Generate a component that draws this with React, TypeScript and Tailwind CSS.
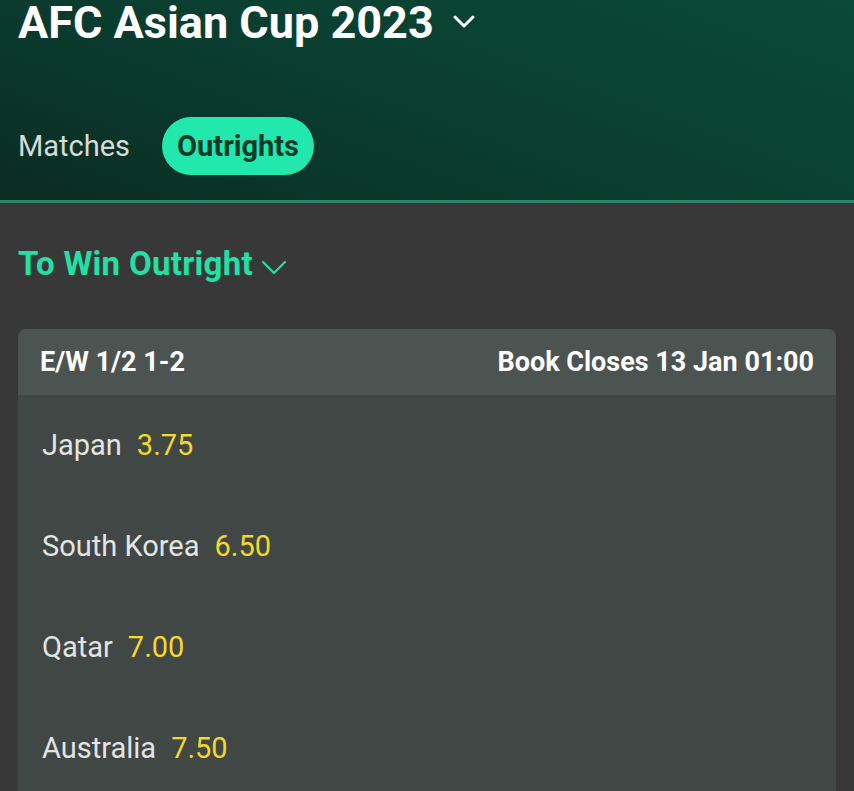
import React from "react";

const rows = [
  { name: "Japan", odds: "3.75" },
  { name: "South Korea", odds: "6.50" },
  { name: "Qatar", odds: "7.00" },
  { name: "Australia", odds: "7.50" },
];

export default function App() {
  return (
    <div className="w-[854px] h-[791px] overflow-hidden bg-[#383838] font-['Roboto',sans-serif]">
      <div className="h-[200px] bg-[linear-gradient(20deg,#0a2c23_0%,#0a3d2f_45%,#0a4a38_100%)] px-[18px]">
        <div className="flex items-center h-[45px]">
          <span className="text-white font-bold text-[45px] leading-[45px] whitespace-nowrap">AFC Asian Cup 2023</span>
          <svg className="ml-[19px] mt-[-2px]" width="22" height="14" viewBox="0 0 22 14">
            <path d="M2 2 L11 11 L20 2" stroke="white" strokeWidth="3" fill="none" strokeLinecap="round" strokeLinejoin="round" />
          </svg>
        </div>
        <div className="flex items-center mt-[72px] h-[58px]">
          <span className="text-[#d6dcd9] text-[29px] leading-none">Matches</span>
          <span className="ml-[32px] h-[58px] px-[15px] rounded-full bg-[#22e8ae] text-[#0a3a2a] font-bold text-[29px] flex items-center leading-none">Outrights</span>
        </div>
      </div>
      <div className="h-[3px] bg-[#2c8866]" />
      <div className="px-[18px]">
        <div className="flex items-center mt-[40px] h-[40px]">
          <span className="text-[#23e1a4] font-bold text-[33px] leading-none tracking-[0.3px] whitespace-nowrap">To Win Outright</span>
          <svg className="ml-[8px] mt-[8px]" width="26" height="15" viewBox="0 0 26 15">
            <path d="M2 2 L13 13 L24 2" stroke="#23e1a4" strokeWidth="2.2" fill="none" strokeLinecap="round" strokeLinejoin="round" />
          </svg>
        </div>
        <div className="mt-[46px] rounded-t-[8px] overflow-hidden bg-[#414745]">
          <div className="h-[66px] bg-[#4c5452] flex items-center justify-between px-[22px] text-white font-bold text-[27px]">
            <span className="whitespace-nowrap">E/W 1/2 1-2</span>
            <span className="whitespace-nowrap">Book Closes 13 Jan 01:00</span>
          </div>
          <div className="pt-[36px] pl-[24px]">
            {rows.map((r) => (
              <div key={r.name} className="h-[101px] text-[29px] leading-none">
                <span className="text-[#e2e5e4]">{r.name}</span>
                <span className="ml-[15px] text-[#f3d928]">{r.odds}</span>
              </div>
            ))}
          </div>
        </div>
      </div>
    </div>
  );
}
